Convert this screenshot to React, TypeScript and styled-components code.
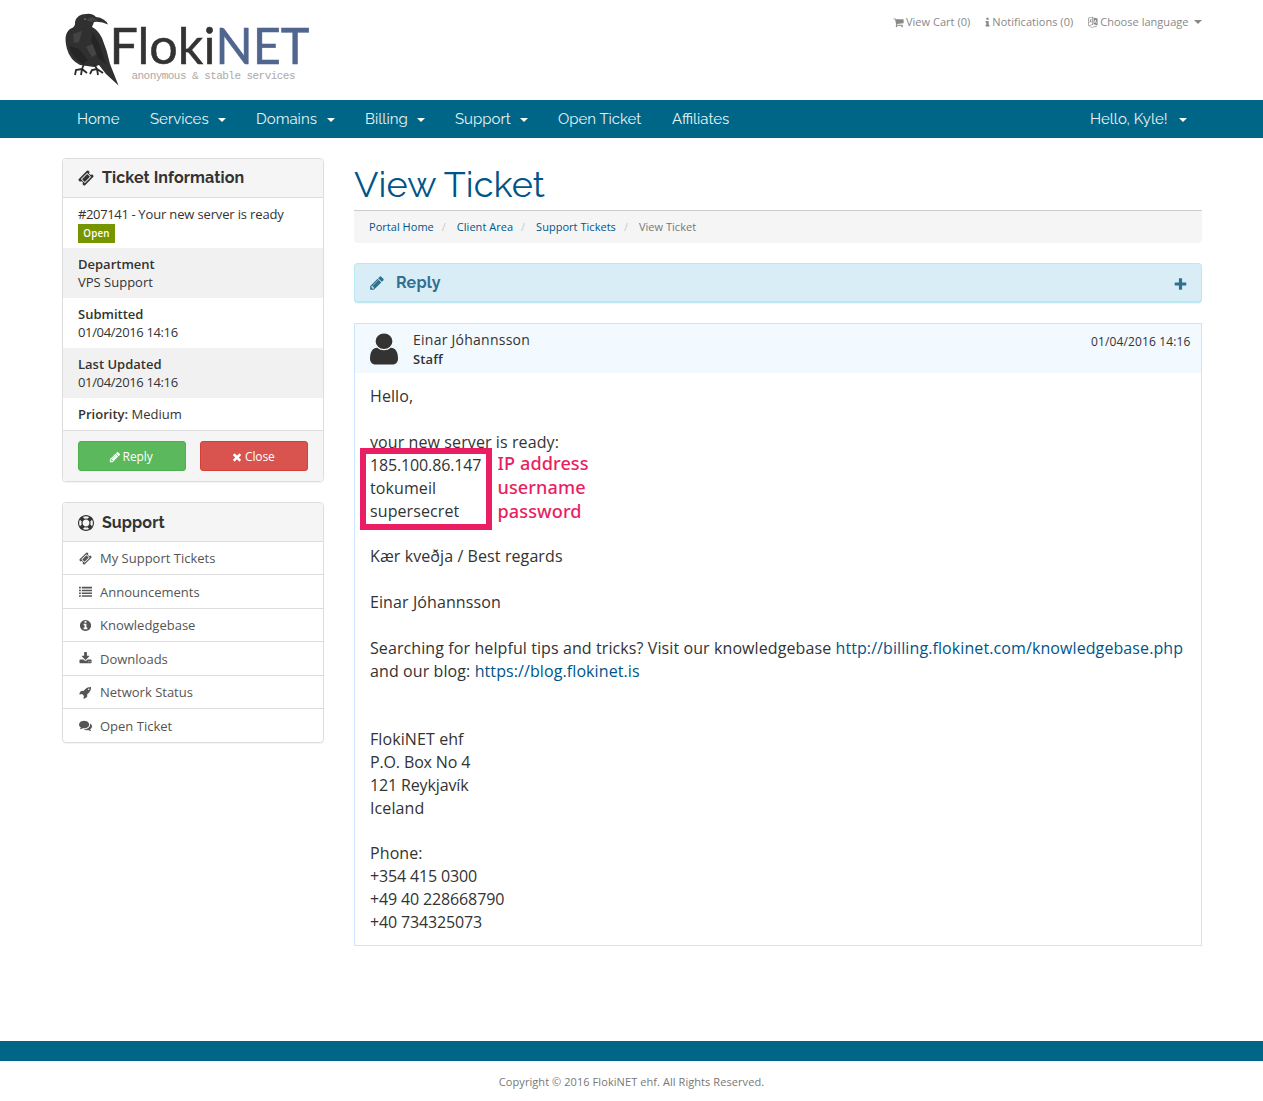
import React from "react";
import styled, { createGlobalStyle } from "styled-components";

const Global = createGlobalStyle`
  *{box-sizing:border-box}
  body{margin:0;background:#fff;font:13px/18px "Open Sans","Noto Sans",sans-serif;color:#333}
  a{color:#058;text-decoration:none}
`;
const heading = `"Raleway","Lato","Open Sans",sans-serif`;

const paths = {
  pencil: "M491 1536l91-91-235-235-91 91v107h128v128h107zm523-928q0-22-22-22-10 0-17 7l-542 542q-7 7-7 17 0 22 22 22 10 0 17-7l542-542q7-7 7-17zm-54-192l416 416-832 832h-416v-416zm683 96q0 53-37 90l-166 166-416-416 166-165q36-38 90-38 53 0 91 38l235 234q37 39 37 91z",
  ticket: "M1024 452l316 316-572 572-316-316zm-211 979l618-618q19-19 19-45t-19-45l-362-362q-18-18-45-18t-45 18l-618 618q-19 19-19 45t19 45l362 362q18 18 45 18t45-18zm889-637l-907 908q-37 37-90.5 37t-90.5-37l-126-126q56-56 56-136t-56-136-136-56-136 56l-125-126q-37-37-37-90.5t37-90.5l907-906q37-37 90.5-37t90.5 37l125 125q-56 56-56 136t56 136 136 56 136-56l126 125q37 37 37 90.5t-37 90.5z",
  user: "M1536 1399q0 109-62.5 187t-150.5 78h-854q-88 0-150.5-78t-62.5-187q0-85 8.5-160.5t31.5-152 58.5-131 94-89 134.5-34.5q131 128 313 128t313-128q76 0 134.5 34.5t94 89 58.5 131 31.5 152 8.5 160.5zm-256-887q0 159-112.5 271.5t-271.5 112.5-271.5-112.5-112.5-271.5 112.5-271.5 271.5-112.5 271.5 112.5 112.5 271.5z",
  times: "M1490 1322q0 40-28 68l-136 136q-28 28-68 28t-68-28l-294-294-294 294q-28 28-68 28t-68-28l-136-136q-28-28-28-68t28-68l294-294-294-294q-28-28-28-68t28-68l136-136q28-28 68-28t68 28l294 294 294-294q28-28 68-28t68 28l136 136q28 28 28 68t-28 68l-294 294 294 294q28 28 28 68z",
  plus: "M1600 736v192q0 40-28 68t-68 28h-416v416q0 40-28 68t-68 28h-192q-40 0-68-28t-28-68v-416h-416q-40 0-68-28t-28-68v-192q0-40 28-68t68-28h416v-416q0-40 28-68t68-28h192q40 0 68 28t28 68v416h416q40 0 68 28t28 68z",
  cart: "M704 1536q0 52-38 90t-90 38-90-38-38-90 38-90 90-38 90 38 38 90zm896 0q0 52-38 90t-90 38-90-38-38-90 38-90 90-38 90 38 38 90zm128-1088v512q0 24-16.5 42.5t-40.5 21.5l-1044 122q13 60 13 70 0 16-24 64h920q26 0 45 19t19 45-19 45-45 19h-1024q-26 0-45-19t-19-45q0-11 8-31.5t16-36 21.5-40 15.5-29.5l-177-823h-204q-26 0-45-19t-19-45 19-45 45-19h256q16 0 28.5 6.5t19.5 15.5 13 24.5 8 26 5.5 29.5 4.5 26h1201q26 0 45 19t19 45z",
  info: "M1216 1344v128q0 26-19 45t-45 19h-512q-26 0-45-19t-19-45v-128q0-26 19-45t45-19h64v-384h-64q-26 0-45-19t-19-45v-128q0-26 19-45t45-19h384q26 0 45 19t19 45v576h64q26 0 45 19t19 45zm-128-1152v192q0 26-19 45t-45 19h-256q-26 0-45-19t-19-45v-192q0-26 19-45t45-19h256q26 0 45 19t19 45z",
  ring: "M896 0q182 0 348 71t286 191 191 286 71 348-71 348-191 286-286 191-348 71-348-71-286-191-191-286-71-348 71-348 191-286 286-191 348-71zm0 128q-190 0-361 90l194 194q82-28 167-28t167 28l194-194q-171-90-361-90zm-678 1129l194-194q-28-82-28-167t28-167l-194-194q-90 171-90 361t90 361zm678 407q190 0 361-90l-194-194q-82 28-167 28t-167-28l-194 194q171 90 361 90zm0-384q159 0 271.5-112.5t112.5-271.5-112.5-271.5-271.5-112.5-271.5 112.5-112.5 271.5 112.5 271.5 271.5 112.5zm484-217l194 194q90-171 90-361t-90-361l-194 194q28 82 28 167t-28 167z",
  list: "M0 256h256v224h-256zM384 256h1408v224h-1408zM0 640h256v224h-256zM384 640h1408v224h-1408zM0 1024h256v224h-256zM384 1024h1408v224h-1408zM0 1408h256v224h-256zM384 1408h1408v224h-1408z",
  infoCircle: "M1152 1376v-160q0-14-9-23t-23-9h-96v-512q0-14-9-23t-23-9h-320q-14 0-23 9t-9 23v160q0 14 9 23t23 9h96v320h-96q-14 0-23 9t-9 23v160q0 14 9 23t23 9h448q14 0 23-9t9-23zm-128-896v-160q0-14-9-23t-23-9h-192q-14 0-23 9t-9 23v160q0 14 9 23t23 9h192q14 0 23-9t9-23zm640 416q0 209-103 385.5t-279.5 279.5-385.5 103-385.5-103-279.5-279.5-103-385.5 103-385.5 279.5-279.5 385.5-103 385.5 103 279.5 279.5 103 385.5z",
  download: "M1344 1344q0-26-19-45t-45-19-45 19-19 45 19 45 45 19 45-19 19-45zm256 0q0-26-19-45t-45-19-45 19-19 45 19 45 45 19 45-19 19-45zm128-224v320q0 40-28 68t-68 28h-1472q-40 0-68-28t-28-68v-320q0-40 28-68t68-28h465l135 136q58 56 136 56t136-56l136-136h464q40 0 68 28t28 68zm-325-569q17 41-14 70l-448 448q-18 19-45 19t-45-19l-448-448q-31-29-14-70 17-39 59-39h256v-448q0-26 19-45t45-19h256q26 0 45 19t19 45v448h256q42 0 59 39z",
  rocket: "M1440 448q0-40-28-68t-68-28-68 28-28 68 28 68 68 28 68-28 28-68zm224-288q0 249-75.5 430.5t-253.5 360.5q-81 80-195 176l-20 379q-2 16-16 26l-384 224q-7 4-16 4-12 0-23-9l-64-64q-13-14-8-32l85-276-281-281-276 85q-3 1-9 1-14 0-23-9l-64-64q-17-19-5-39l224-384q10-14 26-16l379-20q96-114 176-195 188-187 358-258t431-71q14 0 24 9.5t10 22.5z",
  comments: "M1408 768q0 139-94 257t-256.5 186.5-353.5 68.5q-86 0-176-16-124 88-278 128-36 9-86 16h-3q-11 0-20.5-8t-11.5-21q-1-3-1-6.5t.5-6.5 2-6l2.5-5 3.5-5.5 4-5 4.5-5 4-4.5q5-6 23-25t26-29.5 22.5-29 25-38.5 20.5-44q-124-72-195-177t-71-224q0-139 94-257t256.5-186.5 353.5-68.5 353.5 68.5 256.5 186.5 94 257zm384 256q0 120-71 224.5t-195 176.5q10 24 20.5 44t25 38.5 22.5 29 26 29.5 23 25q1 1 4 4.5t4.5 5 4 5 3.5 5.5l2.5 5 2 6 .5 6.5-1 6.5q-3 14-13 22t-22 7q-50-7-86-16-154-40-278-128-90 16-176 16-271 0-472-132 58 4 88 4 161 0 309-45t264-129q125-92 192-212t67-254q0-77-23-152 129 71 204 178t75 230z",
  language: "M150 250L900 100V1400L150 1600zM260 360V1450L790 1300V240zM980 230L1620 400V1480L980 1300zM380 560L680 500V620L600 640C580 800 650 900 720 950L660 1040C590 990 550 930 530 860C500 960 440 1040 370 1090L310 990C410 900 460 800 480 670L380 690zM1200 600L1110 1080L1210 1110L1230 990L1370 1020L1400 1150L1500 1180L1330 630zM1270 760L1330 920L1250 900zM300 1640C600 1760 1050 1760 1350 1600L1320 1540L1560 1530L1450 1720L1410 1670C1080 1850 600 1850 270 1720z",
};
type IconName = keyof typeof paths;

const Glyph = styled.svg<{ $size: number; $width?: number; $dy?: number }>`
  width:${(p) => p.$width ?? p.$size}px;
  height:${(p) => p.$size}px;
  fill:currentColor;
  fill-rule:evenodd;
  flex:none;
  margin-top:${(p) => p.$dy ?? 0}px;
`;
const Icon = ({ name, size, width, dy, box = "0 0 1792 1792" }: { name: IconName; size: number; width?: number; dy?: number; box?: string }) => (
  <Glyph viewBox={box} preserveAspectRatio={name === "user" ? "none" : undefined} $size={size} $width={width} $dy={dy}><path d={paths[name]} /></Glyph>
);

const Container = styled.div`width:1140px;margin:0 auto;display:flex;`;
const Header = styled(Container).attrs({ as: "header" })`height:100px;justify-content:space-between;`;
const Logo = styled.svg`width:260px;height:90px;margin:4px 0 0 -1.5px;display:block;`;
const TopLinks = styled.div`display:flex;gap:15px;height:16px;margin-top:14px;font-size:11px;line-height:16px;color:#888;letter-spacing:.03px;`;
const TopLink = styled.span`display:flex;align-items:center;gap:2px;white-space:nowrap;`;
const Caret = styled.i<{ $gap: number }>`
  display:inline-block;margin-left:${(p) => p.$gap}px;
  border:4px solid transparent;border-top-color:currentColor;border-bottom:0;
`;

const NavBar = styled.nav`height:38px;background:#006687;`;
const NavItem = styled.a<{ $w: number }>`
  width:${(p) => p.$w}px;padding-left:15.5px;display:flex;align-items:center;height:38px;
  color:#e8f3f6;font:400 15px/38px ${heading};white-space:nowrap;
  ${Caret}{color:#fff;margin:2px 15px 0 auto}
  &:last-child{margin-left:auto}
`;

const Body = styled(Container)`padding-top:20px;gap:30px;height:903px;align-items:flex-start;`;
const Sidebar = styled.aside`width:262.5px;flex:none;`;
const Panel = styled.section`
  border:1px solid #ddd;border-radius:4px;margin-bottom:20px;overflow:hidden;
  box-shadow:0 1px 1px rgba(0,0,0,.05);
`;
const PanelHead = styled.h3<{ $drop?: number }>`
  margin:0;height:39px;padding:${(p) => p.$drop ?? 0}px 15.5px 0;background:#f5f5f5;border-bottom:1px solid #ddd;
  display:flex;align-items:center;gap:8px;font:700 16px/36px ${heading};letter-spacing:.1px;
`;
const InfoRow = styled.div<{ $shade?: boolean }>`
  padding:7px 15.5px;background:${(p) => (p.$shade ? "#f1f1f1" : "#fff")};
`;
const Strong = styled.strong`font-weight:600;`;
const Digits = styled.span`letter-spacing:-.36px;`;
const Subject = styled.span`letter-spacing:-.15px;`;
const Status = styled.span`
  display:block;width:37px;height:19px;margin-top:1px;background:#779500;color:#fff;letter-spacing:.2px;
  font-size:9.75px;line-height:19px;font-weight:600;text-align:center;
`;
const TitleRow = styled(InfoRow)`height:50px;padding-bottom:0;`;
const PanelFoot = styled.div`
  padding:10px 15px;border-top:1px solid #ddd;background:#f5f5f5;
  display:grid;grid-template-columns:1fr 1fr;gap:14px;
`;
const Button = styled.button<{ $bg: string; $edge: string }>`
  height:30px;padding:2px 2px 0 0;border:1px solid ${(p) => p.$edge};border-radius:3px;background:${(p) => p.$bg};
  color:#fff;font:12px/18px "Open Sans",sans-serif;letter-spacing:-.1px;display:flex;align-items:center;justify-content:center;gap:2px;
`;
const MenuItem = styled.a`
  display:flex;align-items:center;height:33.6px;padding-left:15.5px;gap:7px;color:#555!important;
  &:first-of-type{height:32px}
  & + &{border-top:1px solid #ddd;padding-top:.5px}
`;

const Main = styled.main`flex:1;min-width:0;`;
const Title = styled.h1`
  margin:0;height:53px;border-bottom:1px solid #ccc;color:#058;
  font:400 36px/53px ${heading};letter-spacing:.08px;
`;
const Crumbs = styled.div`
  height:32px;padding:0 15px;background:#f5f5f5;border-radius:0 0 4px 4px;margin-bottom:20px;
  display:flex;font-size:11px;line-height:32px;color:#777;letter-spacing:.03px;
`;
const Slash = styled.span`color:#ccc;width:23px;padding-left:8px;`;
const ReplyBar = styled.div`
  height:40px;border:1px solid #bce8f1;border-bottom-width:2px;border-radius:4px;background:#d9edf7;color:#31708f;
  padding:0 14px 0 15px;display:flex;align-items:center;box-shadow:0 1px 1px rgba(0,0,0,.05);
  font:700 16px/37px ${heading};gap:12px;margin-bottom:20px;letter-spacing:.25px;
  & > svg:last-child{margin-left:auto}
`;
const Reply = styled.article`border:1px solid #cce4fc;height:623px;`;
const ReplyHead = styled.div`
  height:49px;background:#f2f9ff;padding:0 10px 0 15px;display:flex;
`;
const Author = styled.div`margin:6px auto 0 15px;font-size:14px;line-height:19px;letter-spacing:.25px;`;
const Role = styled.div`font-size:13px;font-weight:600;line-height:20px;letter-spacing:.1px;`;
const Stamp = styled.time`font-size:12px;line-height:18px;margin-top:9px;letter-spacing:.13px;`;
const Message = styled.div`padding:12.3px 0 0 15px;font-size:16px;line-height:22.857px;white-space:pre-line;letter-spacing:.095px;`;
const Numbers = styled.span`letter-spacing:-.14px;`;
const Credentials = styled.div`position:relative;width:max-content;`;
const Outline = styled.div`position:absolute;left:-10px;top:-6px;width:132px;height:82px;border:6px solid #e91e63;`;
const Notes = styled.div`
  position:absolute;left:127.5px;top:-3px;color:#e91e63;white-space:pre;
  font:500 18.1px/24px "Noto Sans","Open Sans",sans-serif;
`;

const FootBar = styled.div`height:20px;background:#006687;`;
const Copyright = styled.footer`height:40px;text-align:center;font-size:11px;line-height:42px;color:#777;letter-spacing:.07px;`;

const Wordmark = () => (
  <Logo viewBox="60 4 260 90">
    <path fill="#303030" d="M75 22Q77 14 86 14Q92 13 96 17Q105 18 108 24.500Q101 21 94 22L92 27Q98 30 102 38Q107 50 110 64L118.500 85.500L106 74L99 65L94 67L80 65Q70 60 67 49Q63 34 70 29Q76 27 75 22Z" />
    <path fill="#444" d="M86 20L92 17L98 20L91 22ZM73 34L82 31L79 42L74 43ZM86 47L93 44L97 54L92 57Z" />
    <path fill="#252525" d="M69 46L79 49L88 60L83 64Q73 59 69 46ZM93 32L100 46L106 64L98 58L91 40Z" />
    <path fill="none" stroke="#292929" strokeWidth="1.8" d="M84 64L82 69L76 70L75 75M82 69L81 75M82 69L87 73M94 64L97 69L92 70L90 74M97 69L98 75M97 69L103 73" />
    <circle cx="85" cy="19" r="1" fill="#526ca0" />
    <g fontFamily="Lato, sans-serif" fontSize="50">
      <text x="109.500" y="64" fill="#333" stroke="#333" strokeWidth=".5" textLength="106" lengthAdjust="spacingAndGlyphs">Floki</text>
      <text x="215.500" y="64" fill="#50668f" stroke="#50668f" strokeWidth=".5" textLength="94" lengthAdjust="spacingAndGlyphs">NET</text>
    </g>
    <text x="131.500" y="79" fill="#aaa" fontFamily="Liberation Mono, monospace" fontSize="11" textLength="164">anonymous &amp; stable services</text>
  </Logo>
);

const menu: [IconName, string][] = [
  ["ticket", "My Support Tickets"], ["list", "Announcements"], ["infoCircle", "Knowledgebase"],
  ["download", "Downloads"], ["rocket", "Network Status"], ["comments", "Open Ticket"],
];
const nav: [string, number, boolean][] = [
  ["Home", 73, false], ["Services", 106, true], ["Domains", 109, true], ["Billing", 90, true],
  ["Support", 103, true], ["Open Ticket", 114, false], ["Affiliates", 87, false], ["Hello, Kyle!", 127, true],
];

export default function App() {
  return (
    <>
      <Global />
      <Header>
        <Wordmark />
        <TopLinks>
          <TopLink><Icon name="cart" size={11} />View Cart (0)</TopLink>
          <TopLink><Icon name="info" size={11} width={5} box="490 0 812 1792" />Notifications (0)</TopLink>
          <TopLink><Icon name="language" size={12} width={10} box="100 50 1592 1792" />Choose language<Caret $gap={3} /></TopLink>
        </TopLinks>
      </Header>
      <NavBar>
        <Container>
          {nav.map(([label, w, caret]) => (
            <NavItem key={label} $w={w}>{label}{caret && <Caret $gap={10} />}</NavItem>
          ))}
        </Container>
      </NavBar>
      <Body>
        <Sidebar>
          <Panel>
            <PanelHead><Icon name="ticket" size={16} />Ticket Information</PanelHead>
            <TitleRow><Digits>#207141 - </Digits><Subject>Your new server is ready</Subject><Status>Open</Status></TitleRow>
            <InfoRow $shade><Strong>Department</Strong><br />VPS Support</InfoRow>
            <InfoRow><Strong>Submitted</Strong><br /><Digits>01/04/2016 14:16</Digits></InfoRow>
            <InfoRow $shade><Strong>Last Updated</Strong><br /><Digits>01/04/2016 14:16</Digits></InfoRow>
            <InfoRow><Strong>Priority:</Strong> Medium</InfoRow>
            <PanelFoot>
              <Button $bg="#5cb85c" $edge="#4cae4c"><Icon name="pencil" size={12} />Reply</Button>
              <Button $bg="#d9534f" $edge="#d43f3a"><Icon name="times" size={12} />Close</Button>
            </PanelFoot>
          </Panel>
          <Panel>
            <PanelHead $drop={1}><Icon name="ring" size={16} />Support</PanelHead>
            {menu.map(([icon, label]) => (
              <MenuItem key={label}><Icon name={icon} size={13} width={15} />{label}</MenuItem>
            ))}
          </Panel>
        </Sidebar>
        <Main>
          <Title>View Ticket</Title>
          <Crumbs>
            <a>Portal Home</a><Slash>/</Slash><a>Client Area</a><Slash>/</Slash>
            <a>Support Tickets</a><Slash>/</Slash><span>View Ticket</span>
          </Crumbs>
          <ReplyBar><Icon name="pencil" size={16} width={14} box="128 0 1536 1792" />Reply<Icon name="plus" size={15} width={13} dy={3} box="112 0 1568 1792" /></ReplyBar>
          <Reply>
            <ReplyHead>
              <Icon name="user" size={36} width={28} box="256 0 1280 1792" dy={7} />
              <Author>Einar Jóhannsson<Role>Staff</Role></Author>
              <Stamp>01/04/2016 14:16</Stamp>
            </ReplyHead>
            <Message>
              {"Hello,\n\nyour new server is ready:"}
              <Credentials>
                <Numbers>185.100.86.147</Numbers>
                {"\ntokumeil\nsupersecret"}
                <Outline />
                <Notes>{"IP address\nusername\npassword"}</Notes>
              </Credentials>
              {"\nKær kveðja / Best regards\n\nEinar Jóhannsson\n\nSearching for helpful tips and tricks? Visit our knowledgebase "}
              <a>http://billing.flokinet.com/knowledgebase.php</a>
              {" and our blog: "}
              <a>https://blog.flokinet.is</a>
              {"\n\n\nFlokiNET ehf\n"}
              <Numbers>{"P.O. Box No 4\n121 Reykjavík"}</Numbers>
              {"\nIceland\n\nPhone:\n"}
              <Numbers>{"+354 415 0300\n+49 40 228668790\n+40 734325073"}</Numbers>
            </Message>
          </Reply>
        </Main>
      </Body>
      <FootBar />
      <Copyright>Copyright © 2016 FlokiNET ehf. All Rights Reserved.</Copyright>
    </>
  );
}
